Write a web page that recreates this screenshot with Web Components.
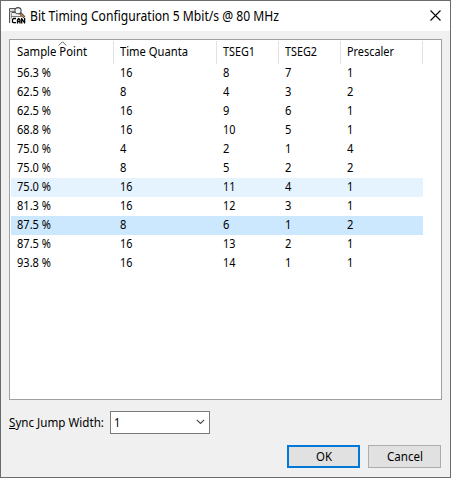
<!DOCTYPE html>
<html lang="en">
<head>
<meta charset="utf-8">
<title>Bit Timing Configuration</title>
<style>
html,body{margin:0;height:100%;overflow:hidden}
body{font:12px/19px "Noto Sans","Open Sans",sans-serif;color:#000}
</style>
</head>
<body>
<timing-dialog></timing-dialog>
<script>
function define(name, html, setup) {
  const t = document.createElement('template');
  t.innerHTML = html;
  customElements.define(name, class extends HTMLElement {
    connectedCallback() {
      if (this.shadowRoot) return;
      this.attachShadow({mode: 'open'}).append(t.content.cloneNode(true));
      if (setup) setup(this, this.shadowRoot);
    }
  });
}

// Text run condensed horizontally to a given width.
define('fit-text', `<style>
:host{display:inline-block;white-space:pre;transform-origin:0 50%}
u{text-underline-offset:1px;text-decoration-thickness:1px}
</style><span></span>`, (el, root) => {
  const span = root.querySelector('span');
  const text = el.getAttribute('text'), key = el.hasAttribute('accesskeyed');
  if (key) { const u = document.createElement('u'); u.textContent = text[0]; span.append(u, text.slice(1)); }
  else span.textContent = text;
  const w = +el.getAttribute('w');
  const natural = span.getBoundingClientRect().width;
  el.style.width = w + 'px';
  el.style.transform = `scaleX(${w / natural})`;
});

define('app-icon', `<style>:host{display:block;width:17px;height:17px}svg{display:block}</style>
<svg width="17" height="17" viewBox="0 0 17 17">
<path d="M.5 16V1.5H10M2.500 12.500V5.500H7" fill="none" stroke="#555"/>
<path d="M1 2h8v2H1zM1 5h1.500v11H1z" fill="#ddd"/>
<path d="M0 4.500h7M2 9.500h10" stroke="#777" fill="none"/>
<path d="M3 6h7v3H3z" fill="#eee"/>
<path d="M11.300 6.300l4 4.200" stroke="#333" stroke-width="2.700"/>
<path d="M11.500 6.500l3.400 3.500" stroke="#c98243" stroke-width="1.500"/>
<circle cx="9" cy="3.700" r="3.100" fill="#f5f8fb" stroke="#444" stroke-width="1.100"/>
<g fill="none" stroke-linejoin="round"><path d="M7 11.500H4.500L3.500 12.500V15L4.500 15.700H7M8.500 16.500V13L9.700 11.500L11 13V16.500M8.500 14.500H11M12.700 16.500V11.500L15.600 16V11" stroke="#fff" stroke-width="3"/>
<path d="M7 11.500H4.500L3.500 12.500V15L4.500 15.700H7M8.500 16.500V13L9.700 11.500L11 13V16.500M8.500 14.500H11M12.700 16.500V11.500L15.600 16V11" stroke="#000" stroke-width="1.300"/></g>
</svg>`);

define('title-bar', `<style>
:host{display:flex;align-items:center;box-sizing:border-box;height:30px;background:#fff;padding:0 9px 2px 8px;font-size:15px}
app-icon{margin-right:4px}
.close{margin-left:auto;display:block}
</style><app-icon></app-icon><slot></slot>
<svg class="close" width="11" height="11"><path d="M.5.5l10 10M10.500.5l-10 10" stroke="#000" stroke-width="1.100"/></svg>`);

define('list-row', `<style>
:host{display:grid;grid-template-columns:103px 103px 62px 62px 82px;width:412px;height:19px;line-height:17px}
:host([hot]){background:#e5f3ff}
:host([selected]){background:#cce8ff}
div{padding-left:6px}
</style>`, (el, root) => {
  el.getAttribute('values').split(',').forEach(v => {
    const cell = document.createElement('div'), f = document.createElement('fit-text');
    f.setAttribute('text', v);
    f.setAttribute('w', v.includes('%') ? 34 : v.length > 1 ? 12.400 : 6.400);
    cell.append(f); root.append(cell);
  });
});

define('list-header', `<style>
:host{display:grid;grid-template-columns:103px 103px 62px 62px 82px;width:412px;height:23px;line-height:22px}
div{padding-left:6px;border-right:1px solid #e2e2e2;position:relative}
svg{position:absolute;left:47px;top:0}
</style>
<div><fit-text text="Sample Point" w="70"></fit-text><svg width="9" height="5"><path d="M.7 4.500l3.800-3.800 3.800 3.800" fill="none" stroke="#666"/></svg></div>
<div><fit-text text="Time Quanta" w="68"></fit-text></div>
<div><fit-text text="TSEG1" w="32"></fit-text></div>
<div><fit-text text="TSEG2" w="32"></fit-text></div>
<div><fit-text text="Prescaler" w="47"></fit-text></div>`);

define('timing-list', `<style>
:host{display:block;box-sizing:border-box;width:433px;height:361px;border:1px solid #a0a0a0;padding:1px;background:#fff}
</style><list-header></list-header><slot></slot>`);

define('combo-box', `<style>
:host{display:flex;box-sizing:border-box;width:100px;height:23px;border:1px solid #7a7a7a;background:#fff;align-items:center;padding:0 4px 1px 3px;justify-content:space-between}
</style><slot></slot><svg width="9" height="6"><path d="M.8.800l3.700 3.700 3.700-3.700" fill="none" stroke="#444" stroke-width="1.100"/></svg>`);

define('push-button', `<style>
:host{display:flex;box-sizing:border-box;width:73px;height:23px;align-items:center;justify-content:center;background:#e1e1e1;border:1px solid #adadad}
:host([default]){border:2px solid #0078d7}
</style><slot></slot>`);

define('timing-dialog', `<style>
:host{display:block;box-sizing:border-box;width:451px;height:478px;border:1px solid #6b6a6c;background:#f0f0f0}
.body{padding:8px 8px 0}
.sync{display:flex;align-items:center;margin-top:11px}
.sync combo-box{margin-left:6px}
.actions{display:flex;justify-content:flex-end;gap:8px;margin-top:11px;padding-right:1px}
</style>
<title-bar><fit-text text="Bit Timing Configuration 5 Mbit/s @ 80 MHz" w="249"></fit-text></title-bar>
<div class="body">
<timing-list>
<list-row values="56.3 %,16,8,7,1"></list-row>
<list-row values="62.5 %,8,4,3,2"></list-row>
<list-row values="62.5 %,16,9,6,1"></list-row>
<list-row values="68.8 %,16,10,5,1"></list-row>
<list-row values="75.0 %,4,2,1,4"></list-row>
<list-row values="75.0 %,8,5,2,2"></list-row>
<list-row hot values="75.0 %,16,11,4,1"></list-row>
<list-row values="81.3 %,16,12,3,1"></list-row>
<list-row selected values="87.5 %,8,6,1,2"></list-row>
<list-row values="87.5 %,16,13,2,1"></list-row>
<list-row values="93.8 %,16,14,1,1"></list-row>
</timing-list>
<div class="sync"><fit-text accesskeyed text="Sync Jump Width:" w="95"></fit-text><combo-box><fit-text text="1" w="6.400"></fit-text></combo-box></div>
<div class="actions"><push-button default><fit-text text="OK" w="16"></fit-text></push-button><push-button><fit-text text="Cancel" w="36"></fit-text></push-button></div>
</div>`);
</script>
</body>
</html>
